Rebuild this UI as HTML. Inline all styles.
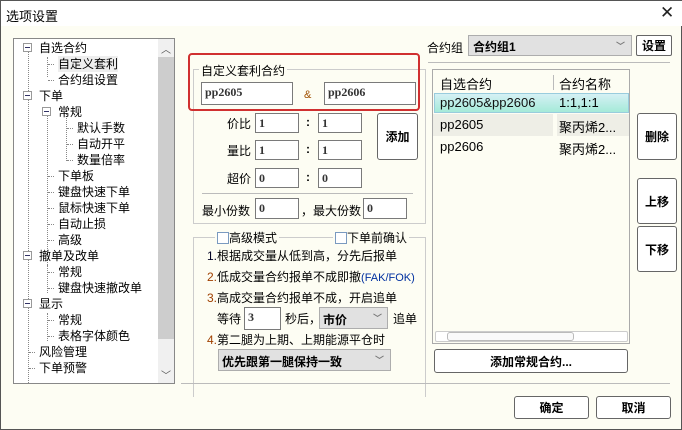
<!DOCTYPE html><html><head><meta charset="utf-8"><style>
*{box-sizing:border-box;margin:0;padding:0}
body{width:682px;height:430px;background:#fdfdf3;font-family:"Liberation Sans","Noto Sans CJK SC",sans-serif;font-size:12px;color:#000;position:relative;overflow:hidden;border:1px solid #555}
.a{position:absolute;white-space:nowrap}
.inp{position:absolute;background:#fff;border:1px solid #7a7a7a;font-family:"Liberation Serif",serif;font-weight:bold;font-size:12px;color:#333;padding:2px 3px}
.btn{position:absolute;background:#fff;border:1px solid #666;border-radius:3px;font-weight:bold;display:flex;align-items:center;justify-content:center;font-size:12px}
.grp{position:absolute;border:1px solid #ccc}
.t{position:absolute;font-size:12px;line-height:16px;white-space:nowrap}
.bx{position:absolute;width:9px;height:9px;border:1px solid #999;background:#fff}
.bx:after{content:"";position:absolute;left:1px;top:3px;width:5px;height:1px;background:#336}
.dl{position:absolute;border-left:1px dotted #888}
.dh{position:absolute;border-top:1px dotted #888;width:6px}
</style></head><body>
<div class="a" style="left:0;top:0;width:682px;height:25px;background:#fff"></div>
<div class="a" style="left:5px;top:5px;font-size:13px">选项设置</div>
<div class="a" style="left:659px;top:2px;font-size:17px;color:#222">✕</div>

<!-- tree -->
<div class="a" style="left:12px;top:37px;width:162px;height:346px;border:1px solid #888;background:#fff;overflow:hidden">
<div class="a" style="left:144px;top:0;width:17px;height:345px;background:#f0f0f0"></div>
<div class="a" style="left:144px;top:18px;width:16px;height:282px;background:#cdcdcd"></div>
<div class="a" style="left:147px;top:2px;font-size:10px;color:#555">︿</div>
<div class="a" style="left:147px;top:328px;font-size:10px;color:#555">﹀</div>
<div class="dl" style="left:14px;top:10px;height:340px"></div>
<div class="dl" style="left:33px;top:74px;height:160px"></div>
<div class="dl" style="left:52px;top:74px;height:48px"></div>
<div class="dl" style="left:33px;top:18px;height:20px"></div>
<div class="dl" style="left:33px;top:226px;height:28px"></div>
<div class="dl" style="left:33px;top:274px;height:28px"></div>
</div>
<div id="tr"></div>
<script>
var items=[[0,"自选合约",1],[1,"自定义套利"],[1,"合约组设置"],[0,"下单",1],[1,"常规",1],[2,"默认手数"],[2,"自动开平"],[2,"数量倍率"],[1,"下单板"],[1,"键盘快速下单"],[1,"鼠标快速下单"],[1,"自动止损"],[1,"高级"],[0,"撤单及改单",1],[1,"常规"],[1,"键盘快速撤改单"],[0,"显示",1],[1,"常规"],[1,"表格字体颜色"],[0,"风险管理"],[0,"下单预警"],[0,"提示及反馈"]];
var h="";items.forEach(function(it,i){var y=39+i*16;var tx=[38,57,76][it[0]];var bxx=[22,41,60][it[0]];
if(y>368)return;
if(it[2])h+='<div class="bx" style="left:'+bxx+'px;top:'+(y+3)+'px"></div>';
else h+='<div class="dh" style="left:'+(tx-10)+'px;top:'+(y+8)+'px"></div>';
h+='<div class="t" style="left:'+tx+'px;top:'+y+'px;'+(i==1?'background:#eee':'')+'">'+it[1]+'</div>';});
document.getElementById('tr').innerHTML=h;
</script>

<!-- group 1 -->
<div class="grp" style="left:192px;top:68px;width:233px;height:155px"></div>
<div class="a" style="left:187px;top:52px;width:232px;height:58px;border:2px solid #d03030;border-radius:4px"></div>
<div class="a" style="left:198px;top:61px;background:#fdfdf3;padding:0 2px">自定义套利合约</div>
<div class="inp" style="left:200px;top:81px;width:92px;height:23px">pp2605</div>
<div class="a" style="left:303px;top:88px;font-size:11px;color:#a05000">&amp;</div>
<div class="inp" style="left:323px;top:81px;width:92px;height:23px">pp2606</div>
<div class="a" style="left:226px;top:114px">价比</div>
<div class="inp" style="left:254px;top:112px;width:44px;height:20px">1</div>
<div class="a" style="left:305px;top:114px;font-weight:bold">:</div>
<div class="inp" style="left:317px;top:112px;width:44px;height:20px">1</div>
<div class="btn" style="left:376px;top:112px;width:41px;height:47px">添加</div>
<div class="a" style="left:226px;top:141px">量比</div>
<div class="inp" style="left:254px;top:139px;width:44px;height:20px">1</div>
<div class="a" style="left:305px;top:141px;font-weight:bold">:</div>
<div class="inp" style="left:317px;top:139px;width:44px;height:20px">1</div>
<div class="a" style="left:226px;top:169px">超价</div>
<div class="inp" style="left:254px;top:167px;width:44px;height:20px">0</div>
<div class="a" style="left:305px;top:169px;font-weight:bold">:</div>
<div class="inp" style="left:317px;top:167px;width:44px;height:20px">0</div>
<div class="a" style="left:201px;top:192px;width:211px;border-top:1px solid #bbb"></div>
<div class="a" style="left:201px;top:201px">最小份数</div>
<div class="inp" style="left:254px;top:197px;width:44px;height:21px">0</div>
<div class="a" style="left:300px;top:201px">，最大份数</div>
<div class="inp" style="left:362px;top:197px;width:44px;height:21px">0</div>

<!-- group 2 -->
<div class="grp" style="left:192px;top:236px;width:233px;height:160px;border-bottom:none"></div>
<div class="a" style="left:214px;top:228px;background:#fdfdf3;padding:0 2px"><span style="display:inline-block;width:12px;height:12px;border:1px solid #7a9ac0;background:#fff;vertical-align:-2px"></span>高级模式</div>
<div class="a" style="left:332px;top:228px;background:#fdfdf3;padding:0 2px"><span style="display:inline-block;width:12px;height:12px;border:1px solid #7a9ac0;background:#fff;vertical-align:-2px"></span>下单前确认</div>
<div class="a" style="left:206px;top:246px"><span style="color:#002">1.</span>根据成交量从低到高，分先后报单</div>
<div class="a" style="left:206px;top:267px"><span style="color:#a04000">2.</span>低成交量合约报单不成即撤<span style="color:#0030a0;font-size:11px">(FAK/FOK)</span></div>
<div class="a" style="left:206px;top:288px"><span style="color:#a04000">3.</span>高成交量合约报单不成，开启追单</div>
<div class="a" style="left:216px;top:309px">等待</div>
<div class="inp" style="left:243px;top:306px;width:37px;height:23px">3</div>
<div class="a" style="left:284px;top:309px">秒后，</div>
<div class="a" style="left:318px;top:306px;width:69px;height:22px;background:#e1e1e1;border:1px solid #adadad;font-weight:bold;padding:3px 3px">市价<span style="position:absolute;right:5px;top:3px;font-size:9px;color:#777">﹀</span></div>
<div class="a" style="left:392px;top:309px">追单</div>
<div class="a" style="left:206px;top:330px"><span style="color:#a04000">4.</span>第二腿为上期、上期能源平仓时</div>
<div class="a" style="left:217px;top:348px;width:173px;height:22px;background:#e1e1e1;border:1px solid #adadad;font-weight:bold;padding:3px 3px">优先跟第一腿保持一致<span style="position:absolute;right:6px;top:3px;font-size:9px;color:#777">﹀</span></div>

<!-- right -->
<div class="a" style="left:426px;top:38px">合约组</div>
<div class="a" style="left:467px;top:34px;width:164px;height:21px;background:#e1e1e1;border:1px solid #adadad;font-weight:bold;padding:2px 4px">合约组1<span style="position:absolute;right:6px;top:3px;font-size:9px;color:#777">﹀</span></div>
<div class="btn" style="left:635px;top:34px;width:36px;height:21px;border-radius:2px">设置</div>
<div class="a" style="left:427px;top:61px;width:242px;border-top:1px solid #bbb"></div>
<div class="a" style="left:431px;top:68px;width:198px;height:275px;border:1px solid #aaa;background:#fdfdf3">
<div class="a" style="left:7px;top:4px;font-size:13px">自选合约</div>
<div class="a" style="left:120px;top:5px;height:15px;border-left:1px solid #bbb"></div>
<div class="a" style="left:126px;top:4px;font-size:13px">合约名称</div>
<div class="a" style="left:1px;top:23px;width:195px;height:20px;border:1px solid #9cd;background:linear-gradient(#d5f0f5,#a5ead8)"></div>
<div class="a" style="left:7px;top:25px;font-size:13px;color:#111">pp2605&amp;pp2606</div>
<div class="a" style="left:126px;top:25px;font-size:13px">1:1,1:1</div>
<div class="a" style="left:0;top:44px;width:196px;height:22px;background:#eeeee6"></div>
<div class="a" style="left:120px;top:44px;width:4px;height:22px;background:#fdfdf3"></div>
<div class="a" style="left:7px;top:47px;font-size:13px">pp2605</div>
<div class="a" style="left:126px;top:47px;font-size:13px">聚丙烯2...</div>
<div class="a" style="left:7px;top:69px;font-size:13px">pp2606</div>
<div class="a" style="left:126px;top:69px;font-size:13px">聚丙烯2...</div>
<div class="a" style="left:2px;top:261px;width:193px;height:11px;border:1px solid #ccc;border-radius:2px;background:#fff"></div>
<div class="a" style="left:14px;top:262px;width:127px;height:9px;border:1px solid #bbb;border-radius:3px;background:#fafafa"></div>
</div>
<div class="btn" style="left:636px;top:112px;width:40px;height:47px">删除</div>
<div class="btn" style="left:636px;top:177px;width:40px;height:46px">上移</div>
<div class="btn" style="left:636px;top:225px;width:40px;height:46px">下移</div>
<div class="btn" style="left:433px;top:348px;width:194px;height:24px">添加常规合约...</div>
<div class="a" style="left:180px;top:382px;width:489px;border-top:1px solid #bbb"></div>
<div class="btn" style="left:513px;top:395px;width:75px;height:23px">确定</div>
<div class="btn" style="left:595px;top:395px;width:75px;height:23px">取消</div>
</body></html>
